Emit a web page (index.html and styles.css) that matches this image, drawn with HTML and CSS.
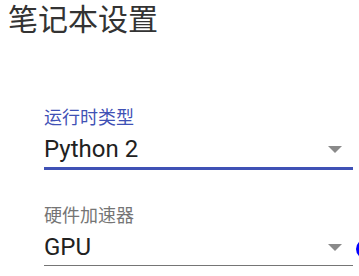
FILE: index.html
```html
<!DOCTYPE html>
<html lang="zh">
<head>
  <meta charset="UTF-8" />
  <title>笔记本设置</title>
  <link rel="stylesheet" href="styles.css">
</head>
<body>

  <div class="dialog">
    <h2 class="dialog-title">笔记本设置</h2>

    <div class="form">
      <!-- 运行时类型 -->
      <div class="field focused">
        <div class="field-label">运行时类型</div>
        <div class="field-select">
          <span class="field-value">Python 2</span>
          <svg class="arrow" width="14" height="7" viewBox="0 0 14 7"><path d="M0 0h14L7 7z" fill="#8a8a8a"/></svg>
        </div>
      </div>

      <!-- 硬件加速器 -->
      <div class="field">
        <div class="field-label">硬件加速器</div>
        <div class="field-select">
          <span class="field-value">GPU</span>
          <svg class="arrow" width="14" height="7" viewBox="0 0 14 7"><path d="M0 0h14L7 7z" fill="#8a8a8a"/></svg>
        </div>
        <span class="focus-dot"></span>
      </div>
    </div>
  </div>

</body>
</html>
```

FILE: styles.css
```css
body {
  margin: 0;
  font-family: Roboto, "Noto Sans CJK SC", sans-serif;
  background-color: #fff;
  color: #212121;
  overflow: hidden;
}

.dialog {
  padding: 0 6px 0 8px;
}

.dialog-title {
  margin: 0;
  font-size: 30px;
  font-weight: normal;
  line-height: 40px;
  color: #333;
}

.form {
  padding-left: 36px;
  margin-top: 69px;
  display: flex;
  flex-direction: column;
  gap: 38px;
}

.field {
  position: relative;
}

.field-label {
  font-size: 18px;
  line-height: 18px;
  color: #757575;
  margin-bottom: 8px;
}

.field.focused .field-label {
  color: #3f51b5;
}

.field-select {
  display: flex;
  align-items: flex-start;
  justify-content: space-between;
  height: 28px;
  padding-bottom: 4px;
  border-bottom: 1px solid #757575;
  margin-bottom: 1px;
}

.field.focused .field-select {
  border-bottom: 3px solid #3f51b5;
  margin-bottom: -1px;
}

.field-value {
  font-size: 24px;
  line-height: 28px;
}

.arrow {
  margin-top: 11px;
  margin-right: 11px;
}

/* círculo azul que asoma por la derecha */
.focus-dot {
  position: absolute;
  left: 312px;
  top: 32px;
  width: 20px;
  height: 20px;
  border-radius: 50%;
  background-color: #0000ff;
}
```
